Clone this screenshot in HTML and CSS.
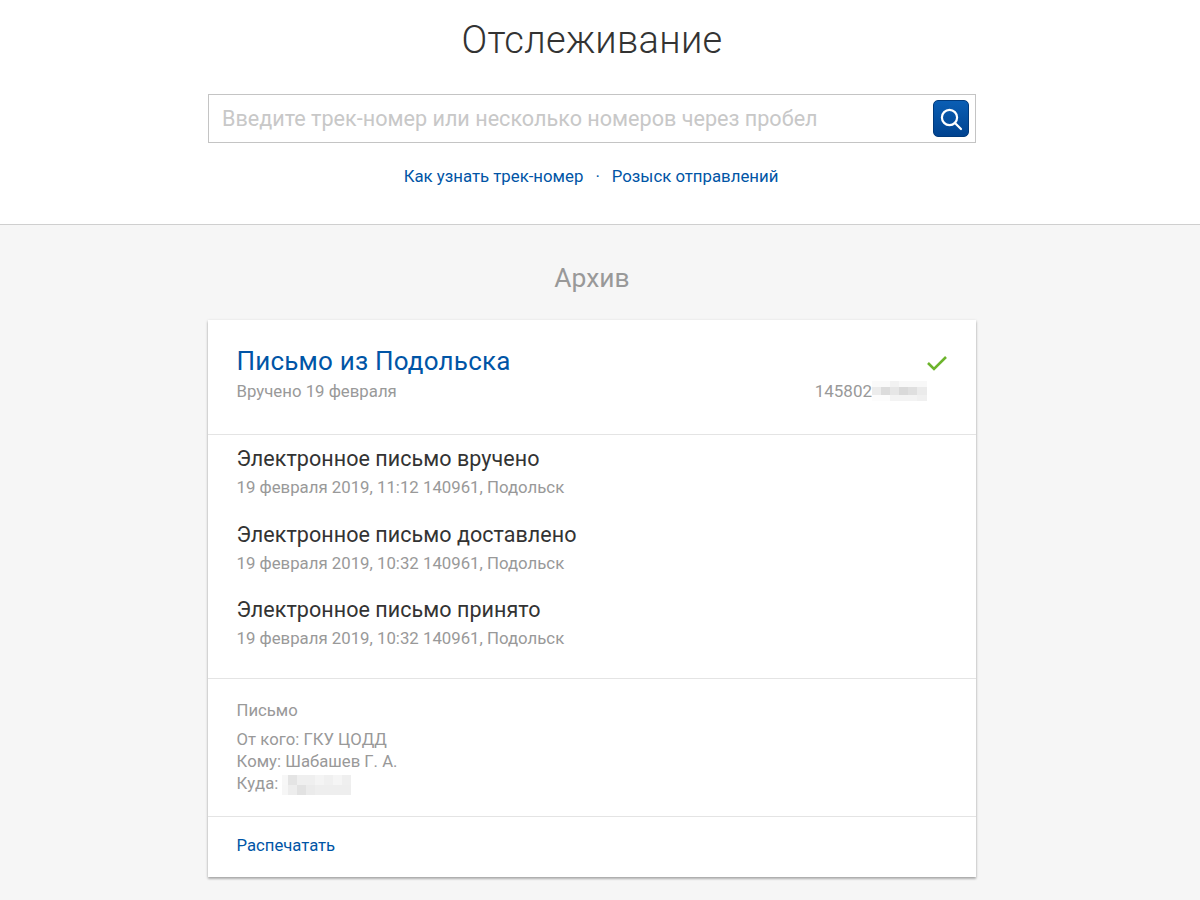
FILE: index.html
```html
<!DOCTYPE html>
<html lang="ru">
<head>
  <meta charset="UTF-8" />
  <title>Отслеживание</title>
  <link rel="stylesheet" href="styles.css">
</head>
<body>
  <header class="top">
    <h1>Отслеживание</h1>
    <div class="search">
      <input class="search-input" type="text" placeholder="Введите трек-номер или несколько номеров через пробел">
      <button class="search-btn" aria-label="Найти">
        <svg width="24" height="24" viewBox="0 0 24 24" fill="none" stroke="#fff" stroke-width="2.2" stroke-linecap="round">
          <circle cx="10.5" cy="10.5" r="7.6"/>
          <path d="M16 16l6 6"/>
        </svg>
      </button>
    </div>
    <nav class="links">
      <a href="#">Как узнать трек-номер</a>
      <span class="dot">·</span>
      <a href="#">Розыск отправлений</a>
    </nav>
  </header>

  <main class="archive">
    <h2>Архив</h2>
    <section class="card">
      <div class="card-head">
        <div>
          <a class="card-title" href="#">Письмо из Подольска</a>
          <div class="card-sub">Вручено 19 февраля</div>
        </div>
        <div class="card-side">
          <svg class="check" width="22" height="16" viewBox="0 0 22 16" fill="none" stroke="#6cb42c" stroke-width="2.6">
            <path d="M2 8l6 6L20 2"/>
          </svg>
          <div class="track">145802<span class="blur blur-track"></span></div>
        </div>
      </div>

      <div class="events">
        <div class="event">
          <div class="event-name">Электронное письмо вручено</div>
          <div class="event-info">19 февраля 2019, 11:12 140961, Подольск</div>
        </div>
        <div class="event">
          <div class="event-name">Электронное письмо доставлено</div>
          <div class="event-info">19 февраля 2019, 10:32 140961, Подольск</div>
        </div>
        <div class="event">
          <div class="event-name">Электронное письмо принято</div>
          <div class="event-info">19 февраля 2019, 10:32 140961, Подольск</div>
        </div>
      </div>

      <div class="details">
        <div class="details-type">Письмо</div>
        <div>От кого: ГКУ ЦОДД</div>
        <div>Кому: Шабашев Г. А.</div>
        <div>Куда: <span class="blur blur-addr"></span></div>
      </div>

      <div class="card-foot">
        <a href="#">Распечатать</a>
      </div>
    </section>
  </main>
</body>
</html>
```

FILE: styles.css
```css
* {
  box-sizing: border-box;
}
html, body {
  height: 900px;
  overflow: hidden;
}
body {
  margin: 0;
  font-family: Roboto, 'Liberation Sans', sans-serif;
  background: #f6f6f6;
  color: #333;
}
a {
  color: #0055a6;
  text-decoration: none;
}
.top {
  height: 225px;
  padding-right: 16px;
  background: #fff;
  border-bottom: 1px solid #cfcfcf;
  display: flex;
  flex-direction: column;
  align-items: center;
}
h1 {
  margin: 16px 0 0 0;
  height: 48px;
  font-size: 38px;
  line-height: 48px;
  font-weight: 300;
  letter-spacing: 0.3px;
  color: #333;
}
.search {
  width: 768px;
  height: 49px;
  margin-top: 30px;
  border: 1px solid #c4c4c4;
  display: flex;
  align-items: center;
  padding: 0 6px 0 13px;
}
.search-input {
  flex: 1;
  border: none;
  outline: none;
  padding: 0;
  font-family: inherit;
  font-size: 21.6px;
  color: #333;
}
.search-input::placeholder {
  color: #c8c8c8;
  opacity: 1;
}
.search-btn {
  width: 36px;
  height: 37px;
  padding: 0;
  border: 1px solid #003a7c;
  border-radius: 5px;
  background: linear-gradient(180deg, #0a5eb4 0%, #004390 100%);
  display: flex;
  align-items: center;
  justify-content: center;
}
.links {
  margin-top: 22px;
  padding-right: 2px;
  display: flex;
  gap: 12px;
  font-size: 16.8px;
  line-height: 22px;
}
.dot {
  color: #0055a6;
}
.archive {
  width: 768px;
  margin-left: 208px;
}
h2 {
  margin: 35px 0 0 0;
  height: 36px;
  font-size: 26.4px;
  line-height: 36px;
  font-weight: 400;
  text-align: center;
  color: #999;
}
.card {
  margin-top: 24px;
  height: 557px;
  background: #fff;
  box-shadow: 0 1px 3px rgba(0,0,0,0.2), 0 2px 2px rgba(0,0,0,0.2);
}
.card-head {
  height: 115px;
  border-bottom: 1px solid #e4e4e4;
  padding: 24px 29px 0 28.5px;
  display: flex;
  justify-content: space-between;
}
.card-title {
  display: block;
  font-size: 26px;
  line-height: 34px;
  letter-spacing: 0.2px;
}
.card-sub {
  font-size: 16.8px;
  line-height: 20px;
  margin-top: 3px;
  color: #999;
}
.card-side {
  display: flex;
  flex-direction: column;
  align-items: flex-end;
}
.check {
  margin-top: 11px;
  margin-right: -1px;
}
.track {
  margin-top: 10px;
  margin-right: 20px;
  font-size: 17px;
  line-height: 20px;
  color: #999;
  display: flex;
  align-items: center;
}
.blur {
  display: inline-block;
  background-repeat: no-repeat;
}
.blur-track {
  width: 55px;
  height: 20px;
  background-image:
    linear-gradient(90deg, #fafafa 0 18px, #f2f2f2 18px 27px, #f8f8f8 27px),
    linear-gradient(90deg, #ececec 0 9px, #dcdcdc 9px 18px, #e6e6e6 18px 27px, #d9d9d9 27px 36px, #dfdfdf 36px 45px, #ebebeb 45px),
    linear-gradient(90deg, #fcfcfc 0 18px, #f3f3f3 18px 45px, #f0f0f0 45px);
  background-size: 100% 6px, 100% 8px, 100% 6px;
  background-position: 0 0, 0 6px, 0 14px;
}
.blur-addr {
  width: 69px;
  height: 20px;
  vertical-align: middle;
  background-image:
    linear-gradient(90deg, #f7f7f7 0 6px, #e4e4e4 6px 15px, #efefef 15px 33px, #f4f4f4 33px 42px, #f0f0f0 42px 51px, #f5f5f5 51px 60px, #efefef 60px),
    linear-gradient(90deg, #f6f6f6 0 6px, #ededed 6px 15px, #e2e2e2 15px 24px, #ebebeb 24px 33px, #eeeeee 33px);
  background-size: 100% 10px, 100% 10px;
  background-position: 0 0, 0 10px;
}
.events {
  height: 244px;
  padding: 8px 29px 0 28.5px;
  border-bottom: 1px solid #e4e4e4;
}
.event {
  height: 75.5px;
}
.event-name {
  font-size: 21.5px;
  line-height: 32px;
  letter-spacing: 0.05px;
  margin-bottom: 1px;
}
.event-info {
  font-size: 16.8px;
  line-height: 22px;
  color: #999;
}
.details {
  height: 138px;
  padding: 21px 29px 0 28.5px;
  border-bottom: 1px solid #e4e4e4;
  font-size: 16.7px;
  font-kerning: none;
  line-height: 22px;
  color: #999;
}
.details-type {
  margin-bottom: 7px;
}
.card-foot {
  padding: 18px 29px 0 28.5px;
  font-size: 16.7px;
  line-height: 22px;
}
```
